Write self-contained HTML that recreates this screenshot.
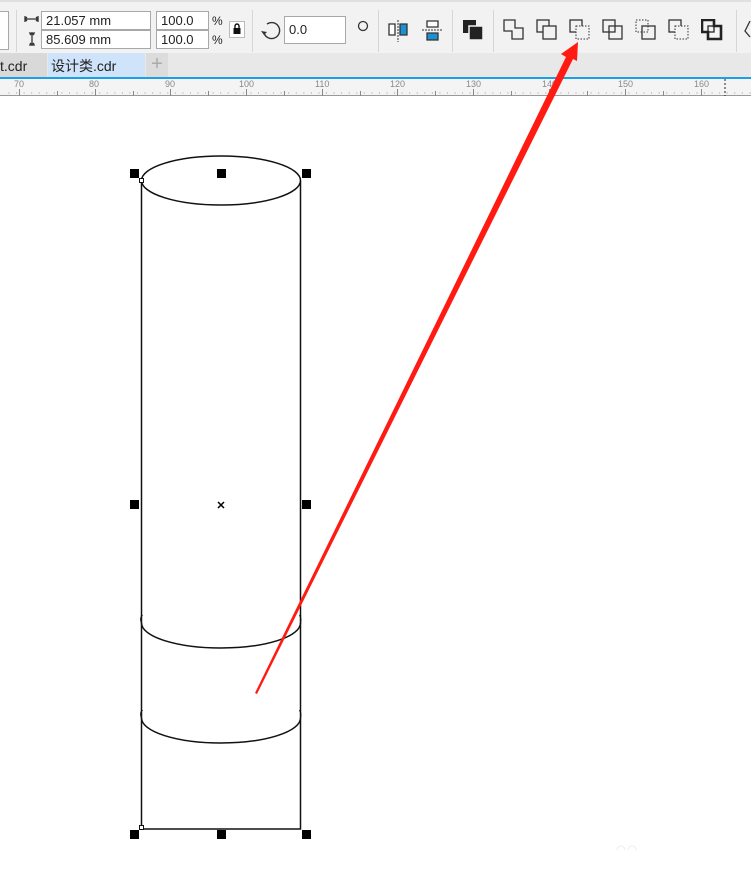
<!DOCTYPE html>
<html><head><meta charset="utf-8"><style>
*{margin:0;padding:0;box-sizing:border-box}
body{width:751px;height:870px;overflow:hidden;background:#fff;font-family:"Liberation Sans","Noto Sans CJK SC",sans-serif;position:relative}
.tb{position:absolute;left:0;top:0;width:751px;height:53px;background:#f2f2f2;border-top:2px solid #e0e0e0}
.inp{position:absolute;background:#fff;border:1px solid #a8a8a8;font-size:13px;color:#222;padding-left:4px;line-height:17px}
.sep{position:absolute;top:8px;width:1px;height:42px;background:#d6d6d6}
.pc{position:absolute;font-size:12px;color:#222}
.tabs{position:absolute;left:0;top:53px;width:751px;height:24px;background:#e8e8e8}
.ruler{position:absolute;left:0;top:79px;width:751px;height:17px;background:#f4f4f4;border-bottom:1px solid #999}
.rl{position:absolute;top:0;font-size:9px;color:#888}
</style></head><body>
<div class="tb">
<div class="inp" style="left:-2px;top:9px;width:11px;height:39px"></div>
<div class="sep" style="left:16px"></div>
<svg style="position:absolute;left:24px;top:14px" width="16" height="30"><path d="M1 3h13M1 0v6M14 0v6M4 3l-2 0M3 1l-2 2 2 2M12 1l2 2-2 2" stroke="#333" fill="none" stroke-width="1.3"/><path d="M8 17v12M5 17h6M5 29h6M6 19l2-2 2 2M6 27l2 2 2-2" stroke="#333" fill="none" stroke-width="1.3"/></svg>
<div class="inp" style="left:41px;top:9px;width:110px;height:19px">21.057 mm</div>
<div class="inp" style="left:41px;top:28px;width:110px;height:19px">85.609 mm</div>
<div class="inp" style="left:156px;top:9px;width:53px;height:19px">100.0</div>
<div class="inp" style="left:156px;top:28px;width:53px;height:19px">100.0</div>
<div class="pc" style="left:212px;top:12px">%</div><div class="pc" style="left:212px;top:31px">%</div>
<div style="position:absolute;left:229px;top:19px;width:16px;height:17px;background:#fff;border:1px solid #bbb"></div>
<svg style="position:absolute;left:232px;top:21px" width="10" height="12"><path d="M3 5V3a2 2 0 0 1 4 0v2" stroke="#111" fill="none" stroke-width="1.4"/><rect x="1.5" y="5" width="7" height="6" fill="#111"/></svg>
<div class="sep" style="left:252px"></div>
<svg style="position:absolute;left:260px;top:17px" width="22" height="22"><path d="M7 5A8 8 0 1 1 4 14" stroke="#333" fill="none" stroke-width="1.4"/><path d="M1 12l3 4 3-3z" fill="#333"/></svg>
<div class="inp" style="left:284px;top:14px;width:62px;height:28px;line-height:26px">0.0</div>
<svg style="position:absolute;left:357px;top:18px" width="12" height="12"><circle cx="6" cy="6" r="4.5" stroke="#333" fill="none" stroke-width="1.3"/></svg>
<div class="sep" style="left:378px"></div>
<svg style="position:absolute;left:388px;top:17px" width="22" height="24"><path d="M1 5h6v11H1z" fill="#fff" stroke="#333" stroke-width="1.3"/><path d="M12 5h7v11h-7z" fill="#1e8fd0" stroke="#333" stroke-width="1.3"/><path d="M10 1v22" stroke="#333" stroke-dasharray="2 1"/></svg>
<svg style="position:absolute;left:421px;top:17px" width="22" height="24"><path d="M6 2h11v6H6z" fill="#fff" stroke="#333" stroke-width="1.3"/><path d="M6 14h11v7H6z" fill="#1e8fd0" stroke="#333" stroke-width="1.3"/><path d="M1 11h20" stroke="#333" stroke-dasharray="2 1"/></svg>
<div class="sep" style="left:452px"></div>
<svg style="position:absolute;left:462px;top:17px" width="22" height="22"><rect x="1" y="1" width="13" height="13" fill="#222"/><rect x="7" y="7" width="14" height="14" fill="#222" stroke="#f2f2f2" stroke-width="1.5"/></svg>
<div class="sep" style="left:493px"></div>
<svg style="position:absolute;left:503px;top:17px" width="22" height="22"><path d="M1 1h11v8h8v11H9v-8H1z" fill="none" stroke="#333" stroke-width="1.3"/></svg>
<svg style="position:absolute;left:536px;top:17px" width="22" height="22"><rect x="1" y="1" width="12" height="12" fill="none" stroke="#333" stroke-width="1.3"/><rect x="7" y="7" width="13" height="13" fill="#f2f2f2" stroke="#333" stroke-width="1.3"/></svg>
<svg style="position:absolute;left:569px;top:17px" width="22" height="22"><rect x="1" y="1" width="12" height="12" fill="none" stroke="#333" stroke-width="1.3"/><rect x="7" y="7" width="13" height="13" fill="#f2f2f2" stroke="#333" stroke-dasharray="1.5 1.5"/></svg>
<svg style="position:absolute;left:602px;top:17px" width="22" height="22"><rect x="1" y="1" width="12" height="12" fill="none" stroke="#333" stroke-width="1.3"/><rect x="7" y="7" width="13" height="13" fill="none" stroke="#333" stroke-width="1.3"/><rect x="7" y="7" width="6" height="6" fill="none" stroke="#333"/></svg>
<svg style="position:absolute;left:635px;top:17px" width="22" height="22"><rect x="1" y="1" width="12" height="12" fill="none" stroke="#333" stroke-dasharray="1.5 1.5"/><rect x="7" y="7" width="13" height="13" fill="none" stroke="#333" stroke-width="1.3"/></svg>
<svg style="position:absolute;left:668px;top:17px" width="22" height="22"><rect x="1" y="1" width="12" height="12" fill="none" stroke="#333" stroke-width="1.3"/><rect x="7" y="7" width="13" height="13" fill="#f2f2f2" stroke="#333" stroke-dasharray="1.5 1.5"/></svg>
<svg style="position:absolute;left:701px;top:17px" width="22" height="22"><path d="M1 1h12v6h7v13H7v-7H1z" fill="none" stroke="#222" stroke-width="2.6"/><rect x="7" y="7" width="6" height="6" fill="none" stroke="#222" stroke-width="1.3"/></svg>
<div class="sep" style="left:736px"></div>
<svg style="position:absolute;left:743px;top:17px" width="8" height="22"><path d="M7 2L2 12l5 6" stroke="#333" fill="none" stroke-width="1.3"/></svg>
</div>
<div class="tabs">
<div style="position:absolute;left:0;top:0;width:47px;height:24px;background:#d9d9d9;font-size:14px;line-height:26px;color:#222">t.cdr</div>
<div style="position:absolute;left:48px;top:0;width:97px;height:24px;background:#cfe3fa;font-size:14px;line-height:26px;color:#222;padding-left:3px">设计类.cdr</div>
<div style="position:absolute;left:146px;top:0;width:22px;height:24px;background:#dcdcdc;color:#aaa;font-size:20px;line-height:22px;text-align:center">+</div>
</div>
<div style="position:absolute;left:0;top:77px;width:751px;height:2px;background:#1a9fe8"></div>
<div class="ruler">
<svg width="751" height="17" style="position:absolute;left:0;top:0">
<g stroke="#888" stroke-width="1" id="t"></g>
<path d="M725 0v17" stroke="#222" stroke-dasharray="2 2"/>
</svg>
<div class="rl" style="left:14px">70</div><div class="rl" style="left:89px">80</div><div class="rl" style="left:165px">90</div><div class="rl" style="left:239px">100</div><div class="rl" style="left:315px">110</div><div class="rl" style="left:390px">120</div><div class="rl" style="left:466px">130</div><div class="rl" style="left:542px">140</div><div class="rl" style="left:618px">150</div><div class="rl" style="left:694px">160</div>
</div>
<svg width="751" height="870" style="position:absolute;left:0;top:0">
<g stroke="#888">
<path d="M19.5 89v7M95.5 89v7M170.5 89v7M246.5 89v7M322.5 89v7M397.5 89v7M473.5 89v7M549.5 89v7M625.5 89v7M701.5 89v7"/>
<path d="M57.5 91v5M133.5 91v5M208.5 91v5M284.5 91v5M360.5 91v5M435.5 91v5M511.5 91v5M587.5 91v5M663.5 91v5" />
<path d="M4 93h751" stroke="#999" stroke-dasharray="1 6.56" stroke-dashoffset="-4.5"/>
</g>
<g fill="none" stroke="#111" stroke-width="1.5">
<ellipse cx="221" cy="180.5" rx="79.5" ry="24.5"/>
<path d="M141.5 181V829H300.5V181"/>
<path d="M141.5 623A79.5 25 0 0 0 300.5 623"/>
<path d="M141.5 718A79.5 25 0 0 0 300.5 718"/>
<path d="M141.5 623q-2-5 1-8M300.5 623q1-5-1-8M141.5 718q-2-5 1-8M300.5 718q1-5-1-8" stroke-width="1.2"/>
</g>
<g fill="#000">
<rect x="130" y="169" width="9" height="9"/><rect x="217" y="169" width="9" height="9"/><rect x="302" y="169" width="9" height="9"/>
<rect x="130" y="500" width="9" height="9"/><rect x="302" y="500" width="9" height="9"/>
<rect x="130" y="830" width="9" height="9"/><rect x="217" y="830" width="9" height="9"/><rect x="302" y="830" width="9" height="9"/>
</g>
<rect x="139.5" y="178.5" width="4" height="4" fill="#fff" stroke="#111"/>
<rect x="139.5" y="825.5" width="4" height="4" fill="#fff" stroke="#111"/>
<path d="M218 502l6 6M224 502l-6 6" stroke="#000" stroke-width="1.5"/>
<polygon points="578,42 561,54 566,57 255,693 257,694 573,59 577,61" fill="#ff1a12"/>
<path d="M617 850a4 4 0 0 1 8 0M628 850a4 4 0 0 1 8 0" stroke="#eee" fill="none"/>
</svg>
</body></html>
